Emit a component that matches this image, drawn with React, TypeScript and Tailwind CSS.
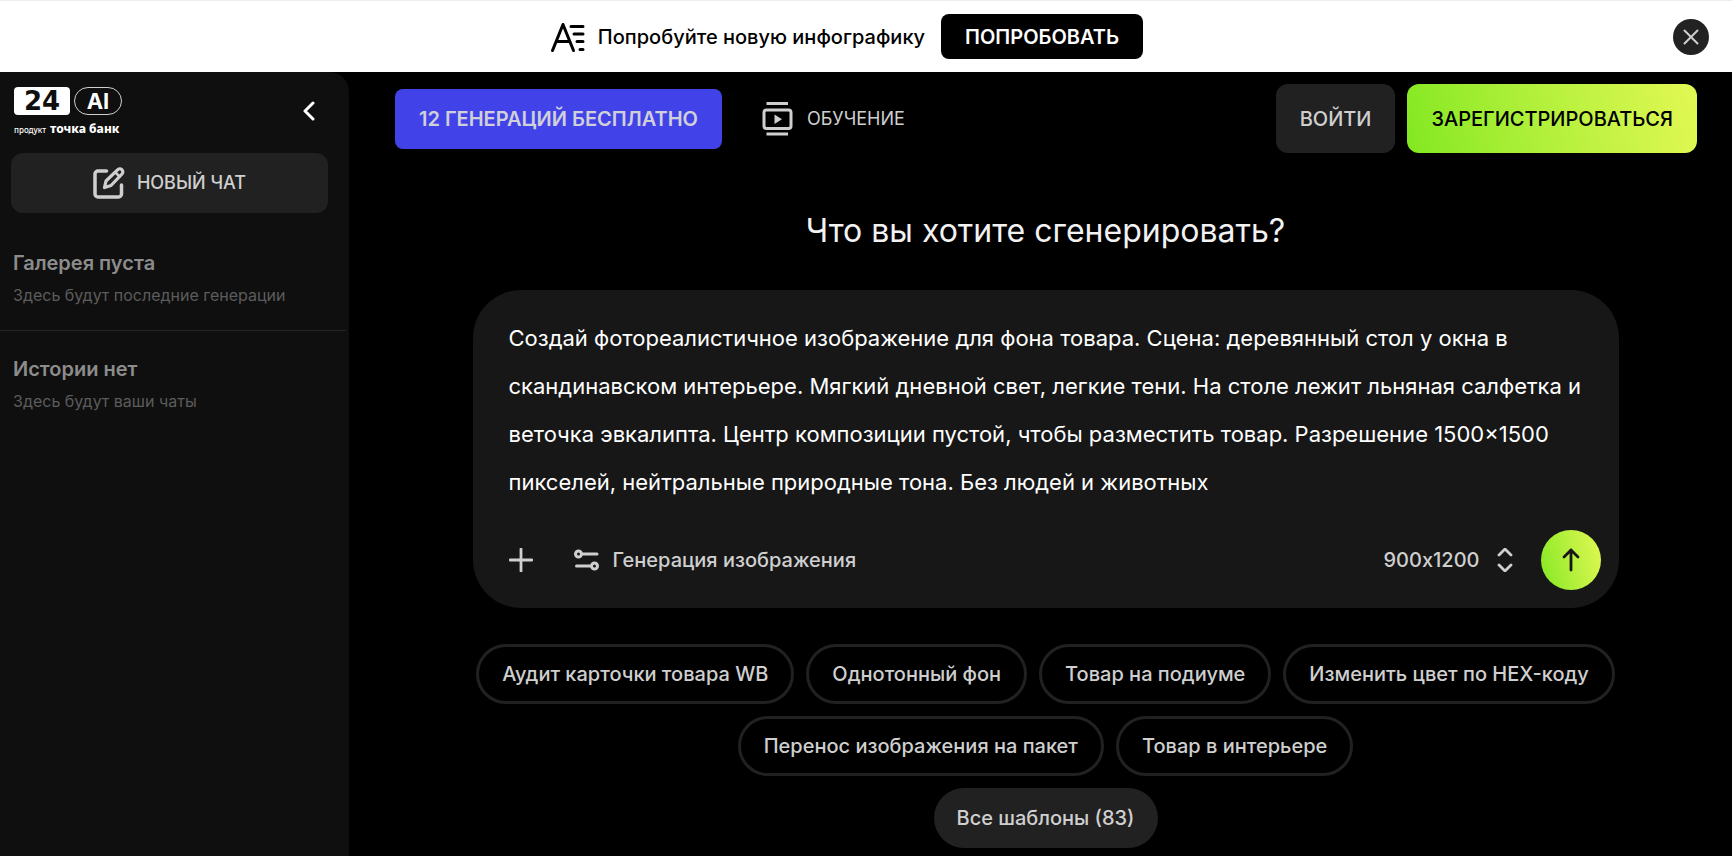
import { useState } from 'react'
import type { ReactNode } from 'react'

const TEMPLATES = [
  'Аудит карточки товара WB',
  'Однотонный фон',
  'Товар на подиуме',
  'Изменить цвет по HEX-коду',
  'Перенос изображения на пакет',
  'Товар в интерьере',
]

const SIZES = ['900x1200', '1200x900', '900x900']

const PROMPT =
  'Создай фотореалистичное изображение для фона товара. Сцена: деревянный стол у окна в скандинавском интерьере. Мягкий дневной свет, легкие тени. На столе лежит льняная салфетка и веточка эвкалипта. Центр композиции пустой, чтобы разместить товар. Разрешение 1500×1500 пикселей, нейтральные природные тона. Без людей и животных'

function Icon({ className, box, children }: { className: string; box: string; children: ReactNode }) {
  return (
    <svg
      className={className}
      viewBox={box}
      fill="none"
      stroke="currentColor"
      strokeLinecap="round"
      strokeLinejoin="round"
      aria-hidden="true"
    >
      {children}
    </svg>
  )
}

function Banner({ onClose }: { onClose: () => void }) {
  return (
    <div className="flex h-18 items-center border-t border-[#ededed] bg-white pr-[23px] pl-5 text-black">
      <div className="flex flex-1 items-center justify-center">
        <Icon className="mr-3 h-8 w-9" box="0 0 36 32">
          <path d="M2.500 29.500 13 3.500 23.500 29.500M6.500 20.500H19.500" strokeWidth="3" />
          <path d="M21 5.500h12M24 13h9M27 20.500h6M30 28.500h3" strokeWidth="3" />
        </Icon>
        <span className="text-xl leading-7 font-medium">Попробуйте новую инфографику</span>
        <button className="ml-4 h-[45px] rounded-lg bg-black px-6 text-xl font-semibold text-white">ПОПРОБОВАТЬ</button>
      </div>
      <button
        onClick={onClose}
        aria-label="Закрыть"
        className="flex h-9 w-9 items-center justify-center rounded-full bg-[#222] text-[#cfcfcf]"
      >
        <Icon className="h-4 w-4" box="0 0 16 16">
          <path d="M1.500 1.500 14.500 14.500M14.500 1.500 1.500 14.500" strokeWidth="2" />
        </Icon>
      </button>
    </div>
  )
}

function Logo() {
  return (
    <a href="/" className="block text-white">
      <span className="flex gap-1">
        <span className="flex h-7 w-14 items-center justify-center rounded-sm bg-white font-['DejaVu_Sans'] text-[26px] leading-7 font-bold text-[#0f0f0f]">
          24
        </span>
        <span className="flex h-7 w-12 items-center justify-center rounded-full border border-[#d0d0d0] text-[22px] leading-7 font-bold">
          AI
        </span>
      </span>
      <span className="mt-1 flex items-baseline gap-1 font-['Noto_Sans'] leading-5">
        <span className="text-[8px] font-medium">продукт</span>
        <span className="text-xs leading-5 font-extrabold">точка банк</span>
      </span>
    </a>
  )
}

function EmptyBlock({ title, text }: { title: string; text: string }) {
  return (
    <section className="px-[13px]">
      <h2 className="text-xl leading-7 font-semibold text-[#8c8c8c]">{title}</h2>
      <p className="mt-1 text-base leading-7 text-[#5c5c5c]">{text}</p>
    </section>
  )
}

function Sidebar() {
  return (
    <aside className="w-[349px] shrink-0 rounded-tr-[20px] bg-[#0f0f0f]">
      <div className="flex items-start justify-between pt-[15px] pr-8 pl-3.5">
        <Logo />
        <button aria-label="Свернуть меню" className="mt-3.5 text-white">
          <Icon className="h-5 w-4" box="0 0 16 20">
            <path d="M12 2 4 10l8 8" strokeWidth="3" />
          </Icon>
        </button>
      </div>
      <div className="px-[11px] pt-[13px]">
        <button className="flex h-15 w-[317px] items-center justify-center gap-3 rounded-xl bg-[#212121] text-lg font-medium text-[#cfcfcf]">
          <Icon className="h-8 w-8" box="0 0 32 32">
            <path d="M13.500 4H5a3 3 0 0 0-3 3v20a3 3 0 0 0 3 3h20.500a3 3 0 0 0 3-3v-9" strokeWidth="3.500" />
            <path d="M11.500 20.500l1.500-6.500L24.500 2.800a3 3 0 0 1 4.500 4.200L18 18.500z" strokeWidth="3.200" />
            <path d="M23 6l3.500 3.500" strokeWidth="2.500" />
          </Icon>
          НОВЫЙ ЧАТ
        </button>
      </div>
      <div className="pt-9">
        <EmptyBlock title="Галерея пуста" text="Здесь будут последние генерации" />
        <hr className="mt-[21px] mr-[3px] mb-6 border-[#242424]" />
        <EmptyBlock title="Истории нет" text="Здесь будут ваши чаты" />
      </div>
    </aside>
  )
}

function Header() {
  return (
    <header className="flex items-center justify-between pt-3 pr-[35px] pl-[46px]">
      <div className="flex items-center">
        <button className="h-15 rounded-lg bg-[#4143e9] px-6 text-xl font-semibold text-[#d0d0d8]">
          12 ГЕНЕРАЦИЙ БЕСПЛАТНО
        </button>
        <a href="#learn" className="ml-[37px] flex items-center gap-3 text-lg text-[#cfcfcf]">
          <Icon className="h-9 w-9" box="0 0 36 36">
            <path d="M7.500 2.500h21.500M7.500 33h21.500" strokeWidth="3" strokeLinecap="butt" />
            <rect x="5" y="9" width="27" height="18.500" rx="2.500" strokeWidth="3" />
            <path d="M15.500 13.500v9.500l7.500-4.700z" fill="currentColor" stroke="none" />
          </Icon>
          ОБУЧЕНИЕ
        </a>
      </div>
      <div className="flex gap-3">
        <button className="h-[69px] rounded-xl bg-[#212121] px-6 text-xl font-medium text-[#cfcfcf]">ВОЙТИ</button>
        <button className="h-[69px] rounded-xl bg-linear-75 from-[#82e820] to-[#e2f853] px-6 text-xl font-medium text-black">
          ЗАРЕГИСТРИРОВАТЬСЯ
        </button>
      </div>
    </header>
  )
}

function PromptBox() {
  const [prompt, setPrompt] = useState(PROMPT)
  const [size, setSize] = useState(SIZES[0])

  return (
    <form
      onSubmit={(e) => e.preventDefault()}
      className="mt-[39px] w-full max-w-[1146px] rounded-[48px] bg-[#171717] pt-6 pr-4.5 pb-4.5 pl-9"
    >
      <textarea
        aria-label="Запрос"
        rows={4}
        value={prompt}
        onChange={(e) => setPrompt(e.target.value)}
        className="block w-full resize-none overflow-hidden text-[22px] leading-12 text-white outline-none"
      />
      <div className="mt-6 flex items-center text-[#cfcfcf]">
        <button type="button" aria-label="Добавить файл">
          <Icon className="h-6 w-6" box="0 0 24 24">
            <path d="M12 1v22M1 12h22" strokeWidth="2.800" />
          </Icon>
        </button>
        <button type="button" className="ml-10 flex items-center gap-3 text-xl font-medium">
          <Icon className="h-7 w-7" box="0 0 28 28">
            <circle cx="5.500" cy="8" r="3" strokeWidth="3" />
            <circle cx="21.500" cy="20" r="3" strokeWidth="3" />
            <path d="M10 8H24M3.500 20h13.500" strokeWidth="3" />
          </Icon>
          Генерация изображения
        </button>
        <div className="relative ml-auto">
          <select
            aria-label="Размер"
            value={size}
            onChange={(e) => setSize(e.target.value)}
            className="h-12 appearance-none bg-transparent pr-8 text-xl font-medium outline-none [font-feature-settings:'calt'_0]"
          >
            {SIZES.map((s) => (
              <option key={s}>{s}</option>
            ))}
          </select>
          <Icon className="pointer-events-none absolute top-3 right-0 h-6 w-4" box="0 0 16 24">
            <path d="M2 7l6-6 6 6M2 17l6 6 6-6" strokeWidth="2.800" />
          </Icon>
        </div>
        <button
          aria-label="Отправить"
          className="ml-7 flex h-15 w-15 items-center justify-center rounded-full bg-linear-75 from-[#82e820] to-[#e2f853] text-[#171717]"
        >
          <Icon className="h-6 w-6" box="0 0 24 24">
            <path d="M12 22V2M5 9l7-7 7 7" strokeWidth="2.800" />
          </Icon>
        </button>
      </div>
    </form>
  )
}

export default function App() {
  const [banner, setBanner] = useState(true)

  return (
    <div className="flex min-h-screen flex-col bg-black font-[Inter,'Liberation_Sans',sans-serif] text-white">
      {banner && <Banner onClose={() => setBanner(false)} />}
      <div className="flex flex-1">
        <Sidebar />
        <div className="min-w-0 flex-1">
          <Header />
          <main className="flex flex-col items-center pr-5 pb-2 pl-[30px]">
            <h1 className="mt-[58px] text-[32px] leading-10 text-[#f2f2f2]">Что вы хотите сгенерировать?</h1>
            <PromptBox />
            <div className="mt-9 flex max-w-[1160px] flex-wrap justify-center gap-3">
              {TEMPLATES.map((name) => (
                <button
                  key={name}
                  className="h-15 rounded-full border-3 border-[#212121] px-[23px] text-xl font-medium text-[#cfcfcf]"
                >
                  {name}
                </button>
              ))}
            </div>
            <button className="mt-3 h-15 rounded-full bg-[#212121] px-[23px] text-xl font-medium text-[#cfcfcf]">
              Все шаблоны (83)
            </button>
          </main>
        </div>
      </div>
    </div>
  )
}
